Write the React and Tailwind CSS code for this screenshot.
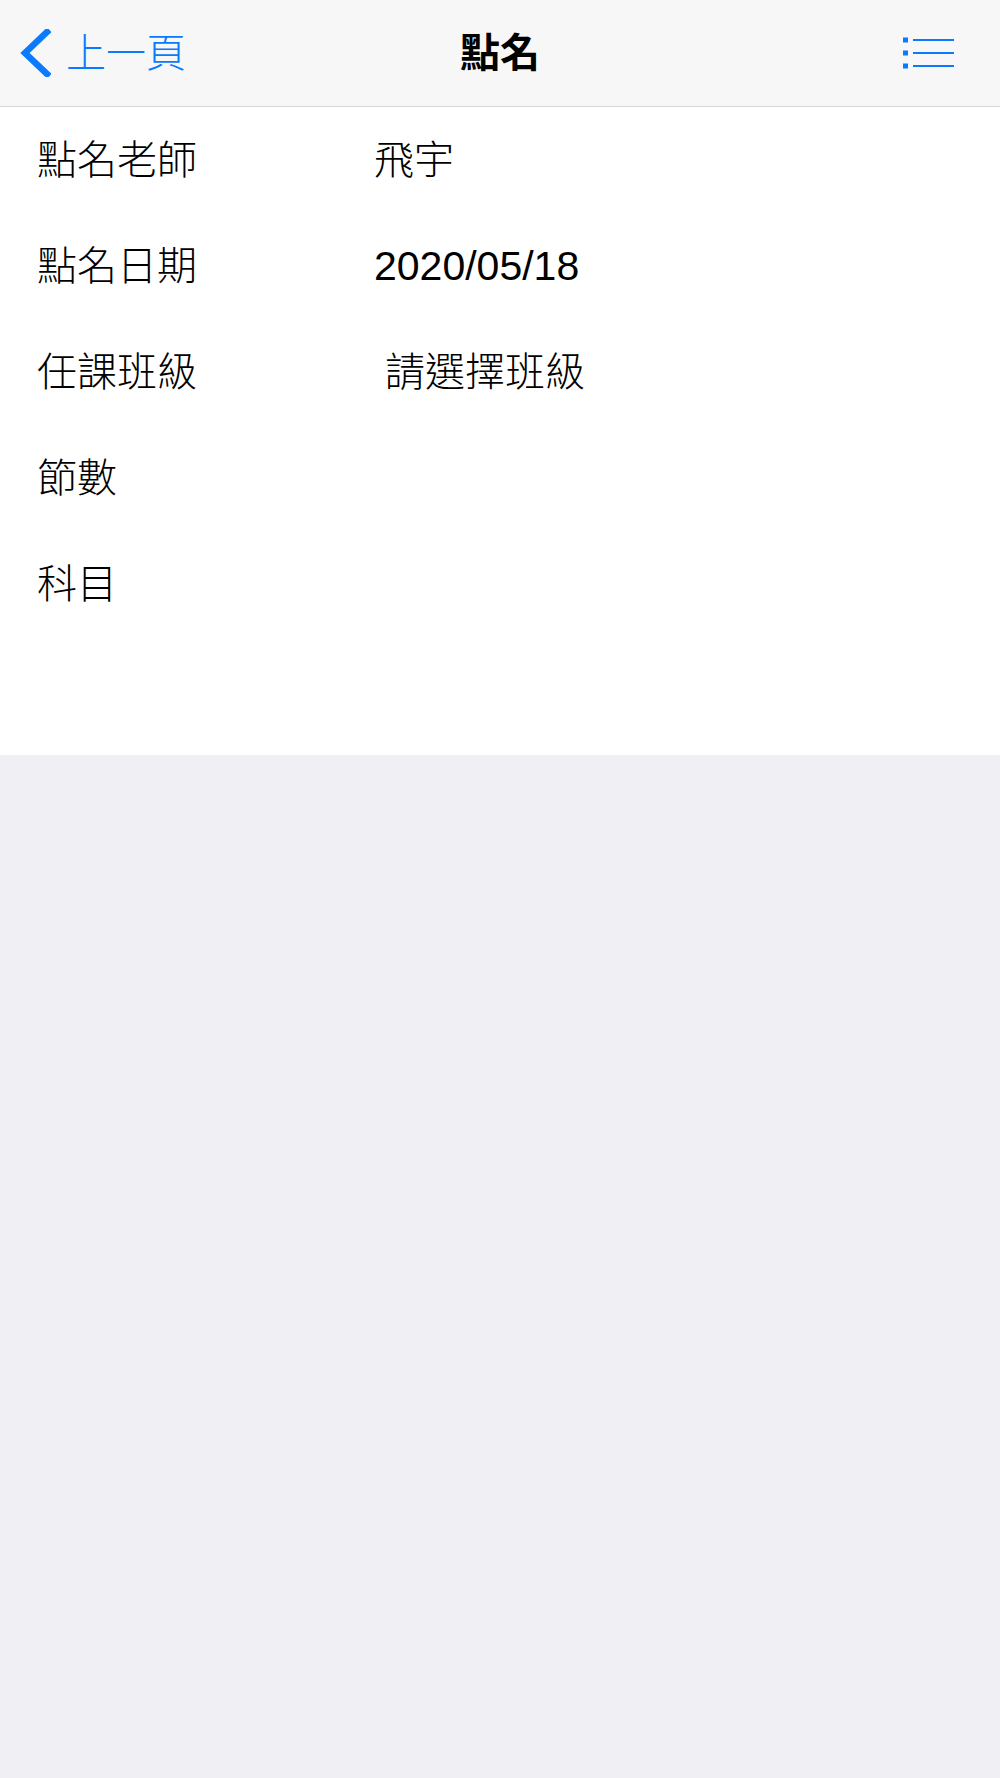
export default function App() {
  const rows = [
    { label: "點名老師", value: "飛宇" },
    { label: "點名日期", value: "2020/05/18", latin: true },
    { label: "任課班級", value: "請選擇班級", indent: true },
    { label: "節數", value: "" },
    { label: "科目", value: "" },
  ];

  const cjk = { fontFamily: '"Liberation Sans", "Noto Sans CJK TC", sans-serif' };

  return (
    <div className="min-h-screen bg-[#efeff4]" style={cjk}>
      {/* Nav bar */}
      <div className="grid h-[107px] grid-cols-[1fr_auto_1fr] items-center border-b border-[#d6d6d6] bg-[#f7f7f7]">
        <div className="flex items-center pl-[19px]">
          <svg width="32" height="48" viewBox="0 0 32 48" fill="none">
            <polyline
              points="28,3 6,24 28,45"
              stroke="#0a7aff"
              strokeWidth="6.5"
              strokeLinecap="square"
              strokeLinejoin="miter"
            />
          </svg>
          <span className="ml-[15px] text-[40px] font-light leading-none text-[#0a7aff]">
            上一頁
          </span>
        </div>
        <div className="text-[40px] font-bold leading-none text-black">點名</div>
        <div className="flex justify-end pr-[45px]">
          <svg width="52" height="32" viewBox="0 0 52 32">
            <rect x="0" y="0.5" width="5" height="5" fill="#0a7aff" />
            <rect x="0" y="13.5" width="5" height="5" fill="#0a7aff" />
            <rect x="0" y="26.5" width="5" height="5" fill="#0a7aff" />
            <rect x="10" y="2" width="41" height="2" fill="#0a7aff" />
            <rect x="10" y="15" width="41" height="2" fill="#0a7aff" />
            <rect x="10" y="28" width="41" height="2" fill="#0a7aff" />
          </svg>
        </div>
      </div>

      {/* Form */}
      <div className="bg-white pb-[118px]">
        {rows.map((row) => (
          <div key={row.label} className="flex h-[106px] items-center pl-[37px]">
            <div className="w-[337px] text-[40px] font-light leading-none text-black">
              {row.label}
            </div>
            <div
              className={`leading-none text-black ${
                row.latin ? "text-[41px] font-normal" : "text-[40px] font-light"
              } ${row.indent ? "pl-[11px]" : ""}`}
            >
              {row.value}
            </div>
          </div>
        ))}
      </div>
    </div>
  );
}
